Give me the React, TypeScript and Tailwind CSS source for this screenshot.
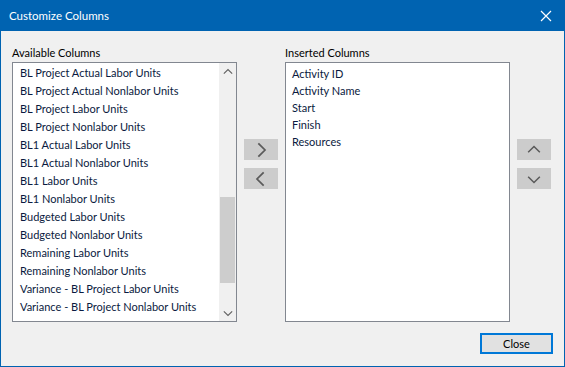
import React from "react"

const available = [
  "BL Project Actual Labor Units",
  "BL Project Actual Nonlabor Units",
  "BL Project Labor Units",
  "BL Project Nonlabor Units",
  "BL1 Actual Labor Units",
  "BL1 Actual Nonlabor Units",
  "BL1 Labor Units",
  "BL1 Nonlabor Units",
  "Budgeted Labor Units",
  "Budgeted Nonlabor Units",
  "Remaining Labor Units",
  "Remaining Nonlabor Units",
  "Variance - BL Project Labor Units",
  "Variance - BL Project Nonlabor Units",
]

const inserted = ["Activity ID", "Activity Name", "Start", "Finish", "Resources"]

function Chevron({ dir, size = 12, stroke = "#5a5a5a" }: { dir: "left" | "right" | "up" | "down"; size?: number; stroke?: string }) {
  const d = {
    right: "M4 1 L9 6 L4 11",
    left: "M8 1 L3 6 L8 11",
    up: "M1 8 L6 3 L11 8",
    down: "M1 4 L6 9 L11 4",
  }[dir]
  return (
    <svg width={size} height={size} viewBox="0 0 12 12" fill="none">
      <path d={d} stroke={stroke} strokeWidth="1.3" />
    </svg>
  )
}

function SideButton({ dir }: { dir: "left" | "right" | "up" | "down" }) {
  return (
    <button className="w-[34px] h-[21px] bg-[#cccccc] flex items-center justify-center">
      <Chevron dir={dir} size={dir === "left" || dir === "right" ? 16 : 14} />
    </button>
  )
}

export default function App() {
  return (
    <div className="w-[565px] h-[367px] bg-[#f0f0f0] border-x border-b border-[#0063b1] flex flex-col text-[11px] text-black" style={{ fontFamily: 'Lato, "Noto Sans", sans-serif' }}>
      {/* title bar */}
      <div className="h-[31px] bg-[#0063b1] flex items-center justify-between pl-[8px] pr-[12px] text-white text-[11.5px] shrink-0">
        <span>Customize Columns</span>
        <svg width="12" height="12" viewBox="0 0 12 12">
          <path d="M1 1 L11 11 M11 1 L1 11" stroke="#fff" strokeWidth="1.2" />
        </svg>
      </div>

      <div className="flex pl-[11px] pt-[13px]">
        <div className="flex flex-col">
          <div className="leading-[17px] h-[18px]">Available Columns</div>
          <div className="w-[225px] h-[260px] bg-white border border-[#828790] flex">
            <div className="flex-1 pl-[7px] pt-[1px]">
              {available.map((a) => (
                <div key={a} className="h-[18px] leading-[18px] whitespace-nowrap text-[#0a1a40]">{a}</div>
              ))}
            </div>
            <div className="w-[17px] bg-[#f0f0f0] flex flex-col items-center">
              <div className="h-[17px] flex items-center justify-center">
                <Chevron dir="up" size={10} stroke="#606060" />
              </div>
              <div className="flex-1 w-full px-[1px] pt-[117px] pb-[18px] flex flex-col">
                <div className="h-[86px] bg-[#cdcdcd]" />
              </div>
              <div className="h-[17px] flex items-center justify-center">
                <Chevron dir="down" size={10} stroke="#606060" />
              </div>
            </div>
          </div>
        </div>

        <div className="w-[48px] flex flex-col items-center pt-[95px] gap-[8px]">
          <SideButton dir="right" />
          <SideButton dir="left" />
        </div>

        <div className="flex flex-col">
          <div className="leading-[17px] h-[18px]">Inserted Columns</div>
          <div className="w-[225px] h-[260px] bg-white border border-[#828790] pl-[6px] pt-[2px]">
            {inserted.map((a) => (
              <div key={a} className="h-[17px] leading-[17px] whitespace-nowrap text-[#0a1a40]">{a}</div>
            ))}
          </div>
        </div>

        <div className="pl-[7px] flex flex-col pt-[95px] gap-[8px]">
          <SideButton dir="up" />
          <SideButton dir="down" />
        </div>
      </div>

      <div className="flex justify-end pr-[11px] pt-[11px]">
        <button className="w-[73px] h-[21px] bg-[#e1e1e1] border-2 border-[#0078d7] flex items-center justify-center leading-none">Close</button>
      </div>
    </div>
  )
}
